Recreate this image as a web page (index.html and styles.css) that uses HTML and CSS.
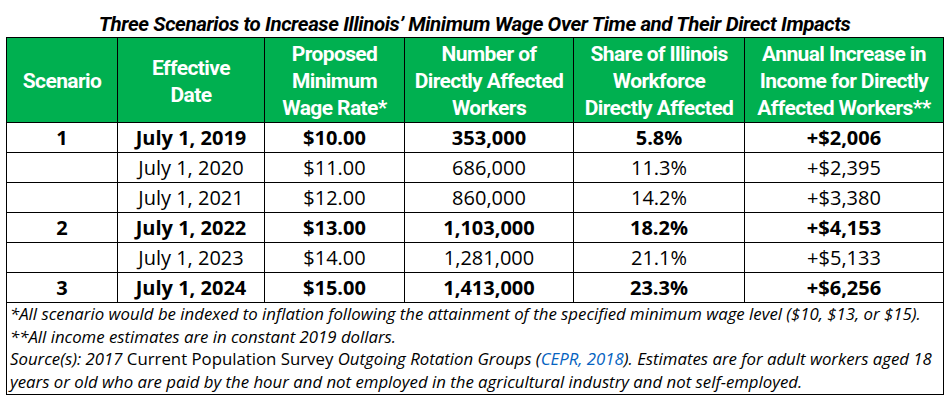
FILE: index.html
```html
<!DOCTYPE html>
<html>
<head>
<meta charset="utf-8">
<link rel="stylesheet" href="styles.css">
</head>
<body>
<div class="page">
  <h1 class="title">Three Scenarios to Increase Illinois’ Minimum Wage Over Time and Their Direct Impacts</h1>
  <table class="wage">
    <colgroup>
      <col class="c1"><col class="c2"><col class="c3"><col class="c4"><col class="c5"><col class="c6">
    </colgroup>
    <thead>
      <tr>
        <th>Scenario</th>
        <th>Effective<br>Date</th>
        <th>Proposed<br>Minimum<br>Wage Rate*</th>
        <th>Number of<br>Directly Affected<br>Workers</th>
        <th>Share of Illinois<br>Workforce<br>Directly Affected</th>
        <th>Annual Increase in<br>Income for Directly<br>Affected Workers**</th>
      </tr>
    </thead>
    <tbody>
      <tr class="bold"><td>1</td><td>July 1, 2019</td><td>$10.00</td><td>353,000</td><td>5.8%</td><td>+$2,006</td></tr>
      <tr><td></td><td>July 1, 2020</td><td>$11.00</td><td>686,000</td><td>11.3%</td><td>+$2,395</td></tr>
      <tr><td></td><td>July 1, 2021</td><td>$12.00</td><td>860,000</td><td>14.2%</td><td>+$3,380</td></tr>
      <tr class="bold"><td>2</td><td>July 1, 2022</td><td>$13.00</td><td>1,103,000</td><td>18.2%</td><td>+$4,153</td></tr>
      <tr><td></td><td>July 1, 2023</td><td>$14.00</td><td>1,281,000</td><td>21.1%</td><td>+$5,133</td></tr>
      <tr class="bold"><td>3</td><td>July 1, 2024</td><td>$15.00</td><td>1,413,000</td><td>23.3%</td><td>+$6,256</td></tr>
      <tr class="notes">
        <td colspan="6">
          <p>*All scenario would be indexed to inflation following the attainment of the specified minimum wage level ($10, $13, or $15).</p>
          <p>**All income estimates are in constant 2019 dollars.</p>
          <p>Source(s): 2017 <span class="up">Current Population Survey</span> Outgoing Rotation Groups (<span class="link">CEPR, 2018</span>). Estimates are for adult workers aged 18<br>years or old who are paid by the hour and not employed in the agricultural industry and not self-employed.</p>
        </td>
      </tr>
    </tbody>
  </table>
</div>
</body>
</html>
```
FILE: styles.css
```css
html, body {
  margin: 0;
  padding: 0;
  background: #ffffff;
}
.page {
  padding: 11px 0 0 6px;
  width: 937px;
}
.title {
  margin: 0;
  font-family: Roboto, "DejaVu Sans Condensed", sans-serif;
  font-style: italic;
  font-weight: bold;
  font-size: 20.5px;
  letter-spacing: -0.4px;
  line-height: 26px;
  text-align: center;
  color: #000;
  white-space: nowrap;
}
.wage {
  border-collapse: collapse;
  width: 937px;
  table-layout: fixed;
  border: 1px solid #000;
}
.c1 { width: 111px; }
.c2 { width: 147px; }
.c3 { width: 140px; }
.c4 { width: 169px; }
.c5 { width: 171px; }
.c6 { width: 199px; }
.wage th {
  background: #00b050;
  color: #fff;
  font-family: Roboto, "DejaVu Sans Condensed", sans-serif;
  font-weight: bold;
  font-size: 21px;
  letter-spacing: -0.6px;
  line-height: 27px;
  height: 82px;
  padding: 3px 0 0 0;
  box-sizing: border-box;
  border: 1px solid #000;
  text-align: center;
  vertical-align: middle;
  white-space: nowrap;
}
.wage td {
  font-family: "Open Sans", "Noto Sans", sans-serif;
  font-size: 20px;
  height: 29px;
  line-height: 28px;
  padding: 0;
  border: 1px solid #000;
  text-align: center;
  vertical-align: middle;
  color: #000;
}
.wage tr.bold td {
  font-weight: bold;
}
.wage tr.notes td {
  text-align: left;
  font-style: italic;
  font-size: 16.8px;
  line-height: 22.5px;
  padding: 0 2px 1px 3px;
  height: auto;
  white-space: nowrap;
}
.notes p {
  margin: 0;
}
.up {
  font-style: normal;
}
.link {
  color: #0563c1;
}
```
